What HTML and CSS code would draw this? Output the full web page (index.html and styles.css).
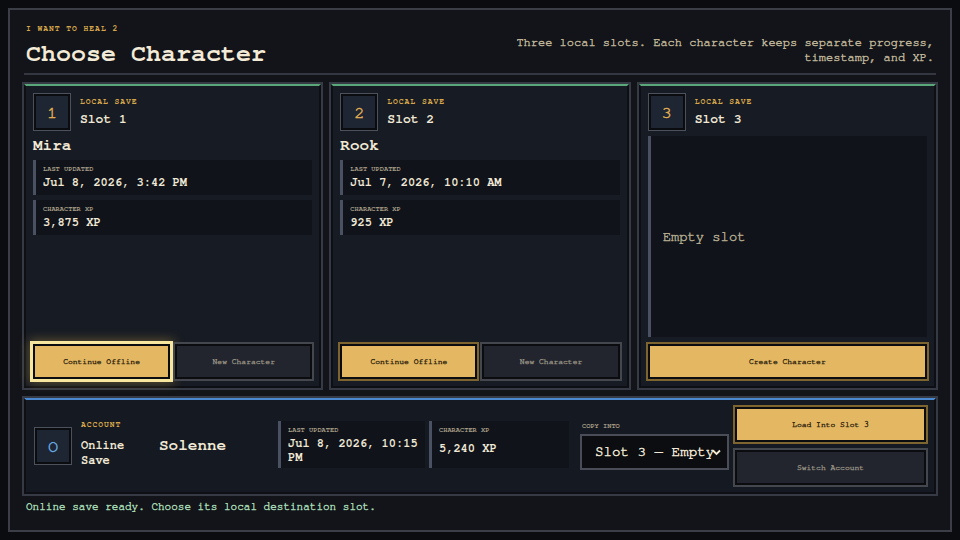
FILE: index.html
```html
<!DOCTYPE html>
<html lang="en">
<head>
<meta charset="utf-8">
<title>Choose Character</title>
<link rel="stylesheet" href="styles.css">
</head>
<body>
<main class="frame">
  <header class="top">
    <div class="title-block">
      <p class="eyebrow">I want to heal 2</p>
      <h1 class="title">Choose Character</h1>
    </div>
    <p class="intro">Three local slots. Each character keeps separate progress, timestamp, and XP.</p>
  </header>

  <section class="slots">
    <article class="slot">
      <div class="slot-head">
        <div class="badge">1</div>
        <div class="slot-meta">
          <p class="kicker">Local save</p>
          <h2 class="slot-name">Slot 1</h2>
        </div>
      </div>
      <div class="slot-body">
        <h3 class="char-name">Mira</h3>
        <div class="stat">
          <span class="stat-label">Last updated</span>
          <span class="stat-value">Jul 8, 2026, 3:42 PM</span>
        </div>
        <div class="stat">
          <span class="stat-label">Character XP</span>
          <span class="stat-value">3,875 XP</span>
        </div>
      </div>
      <div class="slot-actions">
        <button class="btn btn-primary is-focused" type="button">Continue Offline</button>
        <button class="btn btn-secondary" type="button">New Character</button>
      </div>
    </article>

    <article class="slot">
      <div class="slot-head">
        <div class="badge">2</div>
        <div class="slot-meta">
          <p class="kicker">Local save</p>
          <h2 class="slot-name">Slot 2</h2>
        </div>
      </div>
      <div class="slot-body">
        <h3 class="char-name">Rook</h3>
        <div class="stat">
          <span class="stat-label">Last updated</span>
          <span class="stat-value">Jul 7, 2026, 10:10 AM</span>
        </div>
        <div class="stat">
          <span class="stat-label">Character XP</span>
          <span class="stat-value">925 XP</span>
        </div>
      </div>
      <div class="slot-actions">
        <button class="btn btn-primary" type="button">Continue Offline</button>
        <button class="btn btn-secondary" type="button">New Character</button>
      </div>
    </article>

    <article class="slot">
      <div class="slot-head">
        <div class="badge">3</div>
        <div class="slot-meta">
          <p class="kicker">Local save</p>
          <h2 class="slot-name">Slot 3</h2>
        </div>
      </div>
      <div class="slot-body slot-empty">Empty slot</div>
      <div class="slot-actions single">
        <button class="btn btn-primary" type="button">Create Character</button>
      </div>
    </article>
  </section>

  <section class="account">
    <div class="badge badge-online">O</div>
    <div class="acct-meta">
      <p class="kicker">Account</p>
      <h2 class="acct-title">Online Save</h2>
    </div>
    <div class="acct-name">Solenne</div>
    <div class="acct-stats">
      <div class="stat stat-wide">
        <span class="stat-label">Last updated</span>
        <span class="stat-value">Jul 8, 2026, 10:15 PM</span>
      </div>
      <div class="stat stat-narrow">
        <span class="stat-label">Character XP</span>
        <span class="stat-value">5,240 XP</span>
      </div>
    </div>
    <label class="copy">
      <span class="stat-label">Copy into</span>
      <span class="select-wrap">
        <select class="copy-select">
          <option>Slot 3 — Empty</option>
          <option>Slot 1 — Mira</option>
          <option>Slot 2 — Rook</option>
        </select>
        <svg class="chevron" width="9" height="7" viewBox="0 0 9 7" aria-hidden="true">
          <path d="M1 1.5 L4.5 5 L8 1.5" fill="none" stroke="currentColor" stroke-width="1.8"/>
        </svg>
      </span>
    </label>
    <div class="acct-actions">
      <button class="btn btn-primary" type="button">Load Into Slot 3</button>
      <button class="btn btn-secondary" type="button">Switch Account</button>
    </div>
  </section>

  <p class="status">Online save ready. Choose its local destination slot.</p>
</main>
</body>
</html>
```

FILE: styles.css
```css
* {
  box-sizing: border-box;
}

html,
body {
  margin: 0;
  width: 960px;
  height: 540px;
  overflow: hidden;
  background: #0a0c10;
}

body {
  font-family: "FreeMono", "TeX Gyre Cursor", Courier, monospace;
  color: #f1e9d6;
}

p,
h1,
h2,
h3 {
  margin: 0;
}

/* regular-weight copy gets a slightly heavier stroke */
.intro,
.slot-empty,
.status,
.btn,
.copy-select,
.badge {
  -webkit-text-stroke: 0.45px currentColor;
}

.frame {
  margin: 8px;
  height: 524px;
  border: 2px solid #3b3e47;
  background: #121419;
  padding: 14px 14px 0;
  display: flex;
  flex-direction: column;
}

/* header */
.top {
  display: flex;
  justify-content: space-between;
  align-items: flex-end;
  padding-bottom: 5px;
  border-bottom: 2px solid #34373f;
  margin-bottom: 9px;
}

.eyebrow {
  font-size: 8px;
  line-height: 10px;
  font-weight: 700;
  letter-spacing: 0.12em;
  text-transform: uppercase;
  color: #d6a64b;
  margin: 0 0 6px 2px;
}

.title {
  font-size: 25px;
  line-height: 28px;
  font-weight: 700;
  color: #f3ebd7;
  margin-left: 2px;
}

.intro {
  max-width: 440px;
  font-size: 12px;
  line-height: 15px;
  text-align: right;
  color: #bdb296;
  margin: 0 2px 3px 0;
}

/* slot cards */
.slots {
  display: grid;
  grid-template-columns: repeat(3, 1fr);
  gap: 10px;
  height: 304px;
}

.slot {
  display: flex;
  flex-direction: column;
  padding: 7px;
  background: #171b23;
  border: 2px solid #0d0f14;
  border-top-color: #5aa77a;
  box-shadow: 0 0 0 2px #363a45;
  min-width: 0;
}

.slot-head {
  display: flex;
  gap: 9px;
  margin-bottom: 5px;
}

.badge {
  flex: none;
  width: 38px;
  height: 38px;
  display: flex;
  align-items: center;
  justify-content: center;
  border: 1px solid #4c515c;
  box-shadow: inset 0 0 0 2px #0a0c10;
  background: #1e2634;
  color: #e4ae50;
  font-size: 17px;
}

.kicker {
  font-size: 8px;
  line-height: 10px;
  font-weight: 700;
  letter-spacing: 0.12em;
  text-transform: uppercase;
  color: #d6a64b;
}

.slot-meta .kicker {
  margin-top: 4px;
}

.slot-name {
  margin-top: 5px;
  font-size: 13px;
  line-height: 16px;
  font-weight: 700;
  color: #f1e9d6;
}

.slot-body {
  flex: 1;
  display: flex;
  flex-direction: column;
  gap: 5px;
}

.char-name {
  font-size: 16px;
  line-height: 18px;
  font-weight: 700;
  margin-bottom: 1px;
}

.stat {
  display: flex;
  flex-direction: column;
  background: #10131a;
  border-left: 3px solid #4a5162;
  padding: 5px 4px 6px 7px;
}

.stat-label {
  font-size: 7px;
  line-height: 8px;
  font-weight: 700;
  text-transform: uppercase;
  color: #a69d86;
}

.stat-value {
  margin-top: 2px;
  font-size: 12px;
  line-height: 14px;
  font-weight: 700;
  color: #f1e9d6;
}

.slot-empty {
  justify-content: center;
  background: #10131a;
  border-left: 3px solid #4a5162;
  padding-left: 12px;
  font-size: 13.8px;
  color: #b3aa8e;
}

.slot-actions {
  display: grid;
  grid-template-columns: 1fr 1fr;
  gap: 5px;
  margin-top: 7px;
}

.slot-actions.single {
  grid-template-columns: 1fr;
}

/* buttons */
.btn {
  height: 35px;
  border: 2px solid #0b0c10;
  font-family: inherit;
  font-size: 8px;
  padding: 0 6px;
  cursor: pointer;
}

.btn-primary {
  background: #e4b862;
  color: #3a2d14;
  box-shadow: 0 0 0 2px #7e6530;
}

.btn-secondary {
  background: #22252e;
  color: #8f8a7e;
  box-shadow: 0 0 0 2px #45474f;
}

.btn.is-focused {
  box-shadow: 0 0 0 3px #f7e79e, 0 0 10px 4px rgba(230, 185, 80, 0.35);
}

/* online account panel */
.account {
  margin-top: 10px;
  display: flex;
  align-items: center;
  gap: 8px;
  padding: 7px 8px;
  background: #151921;
  border: 2px solid #0d0f14;
  border-top-color: #4a88cf;
  box-shadow: 0 0 0 2px #363a45;
}

.badge-online {
  color: #6aaee6;
}

.acct-meta {
  width: 70px;
  margin: 0 0 4px 1px;
}

.acct-title {
  margin-top: 8px;
  font-size: 12px;
  line-height: 15px;
  font-weight: 700;
}

.acct-name {
  width: 111px;
  font-size: 16px;
  line-height: 18px;
  font-weight: 700;
  margin-bottom: 2px;
}

.acct-stats {
  display: flex;
  gap: 4px;
  height: 47px;
  margin-bottom: 3px;
}

.stat-wide {
  width: 147px;
}

.stat-narrow {
  width: 140px;
}

.stat-narrow .stat-value {
  flex: 1;
  display: flex;
  align-items: center;
  margin-top: 0;
}

.copy {
  display: flex;
  flex-direction: column;
  gap: 4px;
  width: 149px;
  margin-left: 3px;
}

.copy .stat-label {
  padding-left: 2px;
}

.select-wrap {
  position: relative;
  display: block;
  color: #f1e9d6;
}

.copy-select {
  display: block;
  width: 149px;
  height: 36px;
  border: 2px solid #4a4d57;
  border-radius: 0;
  background: #0b0d11;
  color: #f1e9d6;
  font-family: inherit;
  font-size: 14.2px;
  padding: 0 0 0 13px;
  appearance: none;
  -webkit-appearance: none;
}

.chevron {
  position: absolute;
  right: 8px;
  top: 15px;
  pointer-events: none;
}

.acct-actions {
  flex: 1;
  display: grid;
  gap: 8px;
  margin-left: -2px;
}

.status {
  margin-top: 6px;
  margin-left: 2px;
  font-size: 11px;
  line-height: 14px;
  color: #a3d6b1;
}
```
